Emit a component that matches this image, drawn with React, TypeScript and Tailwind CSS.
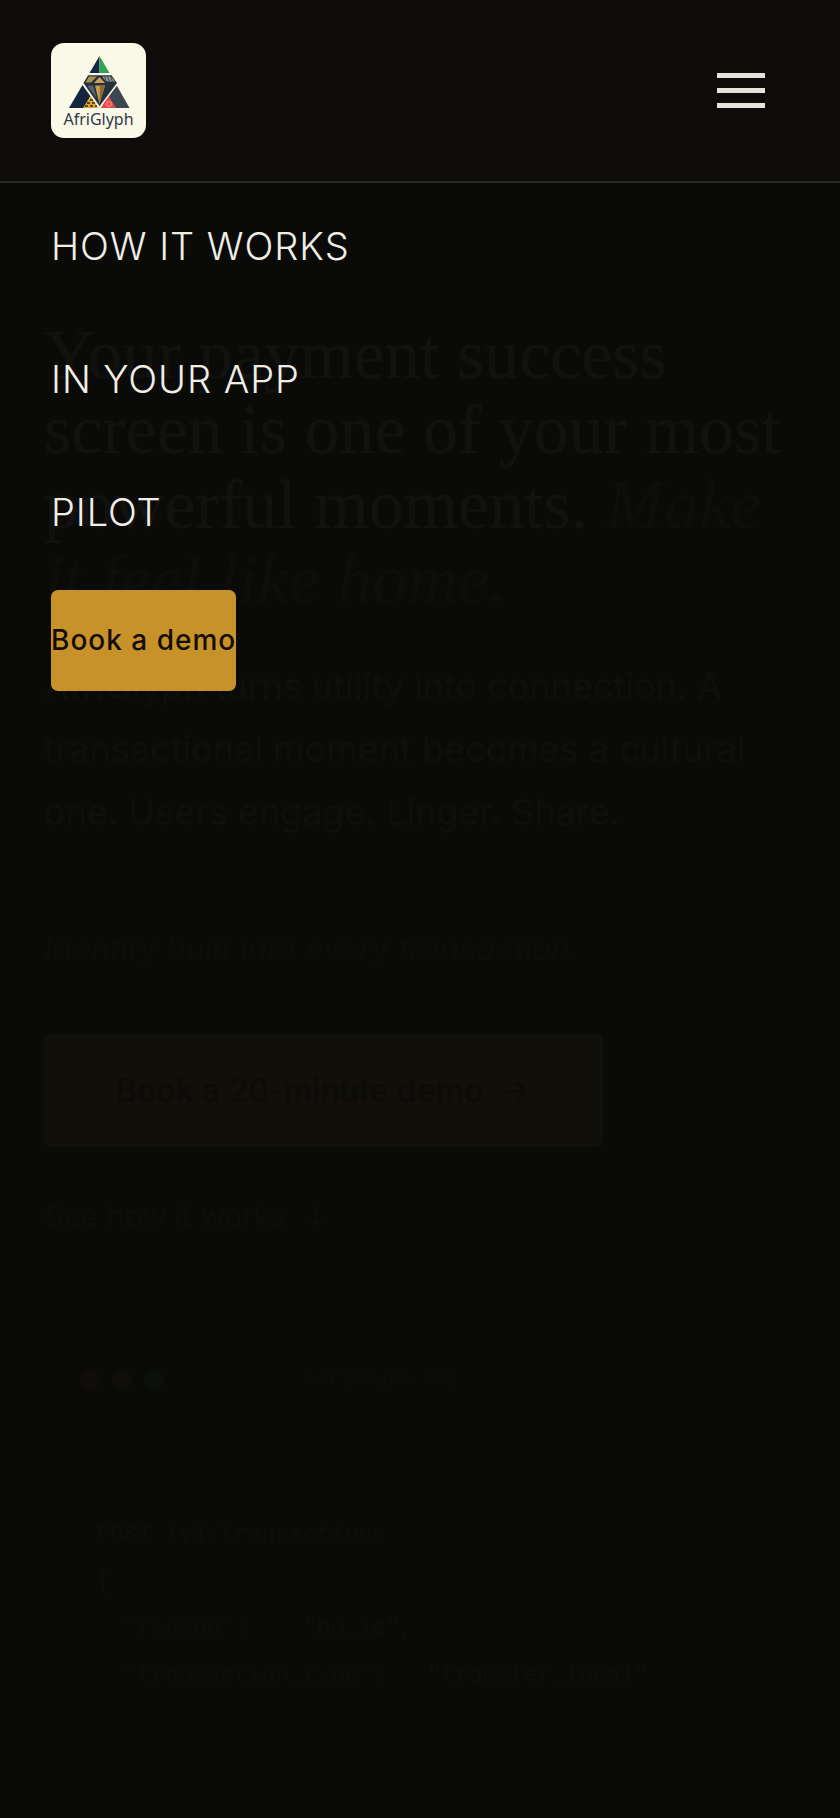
import React, { useState } from 'react';

const NAV_LINKS = [
  { label: 'How it works', href: '#how' },
  { label: 'In your app', href: '#app' },
  { label: 'Pilot', href: '#pilot' },
];

function Logo() {
  return (
    <svg viewBox="0 0 95 95" className="block w-[95px] h-[95px]" role="img" aria-label="AfriGlyph">
      <rect width="95" height="95" rx="13" fill="#faf8e6" />
      <path d="M48.5 13 L38.5 30 H48.5 Z" fill="#14284a" />
      <path d="M48.5 13 L58.5 30 H48.5 Z" fill="#2fa34f" />
      <path d="M31.5 42 L40 54 L33 65 H18 Z" fill="#14233f" />
      <path d="M65.5 42 L57 54 L64 65 H78.5 Z" fill="#3a474f" />
      <path d="M40 52 L47 65 H32 Z" fill="#e0a52f" />
      <path d="M36 60h3M41 60h3M34 63h3M39 63h3M44 63h2M39 57h3" stroke="#2b2a22" strokeWidth="1.4" />
      <path d="M57 52 L65 65 H50 Z" fill="#e8474b" />
      <circle cx="58" cy="61" r="2.4" fill="none" stroke="#f6b0a6" strokeWidth="0.8" />
      <path d="M36.5 31.5 H61 L67 40 L48.5 64.5 L31.5 40 Z" fill="#26303c" stroke="#faf8e6" strokeWidth="1.6" />
      <path d="M38 33.5 H46 L40 39.5 H34.5 Z" fill="#b08f4f" />
      <path d="M48.5 34 L54 40 H43 Z" fill="#c9a45a" />
      <path d="M44 42.5 H54 L48.5 61 Z" fill="#c39d52" />
      <path d="M49 42.5 H54 L48.5 61 Z" fill="#8a6a36" />
      <path d="M36 42.5 H42 L46 56 Z" fill="#56616b" />
      <path d="M51 33.5 h9 l4 5 h-9 Z" fill="#9a9d9c" />
      <path d="M53.5 33.5l2 5M56.5 33.5l2 5M59.5 33.5l2 5" stroke="#26303c" strokeWidth="0.9" />
      <text x="47.5" y="82" textAnchor="middle" fontSize="16" fill="#2f3b4a" className="font-['Noto_Sans',sans-serif]">
        AfriGlyph
      </text>
    </svg>
  );
}

function Hero() {
  return (
    <main className="absolute inset-0 overflow-hidden px-11 pt-[134px]">
      <h1 className="font-['Liberation_Serif',serif] text-[70px] leading-[75px] text-[#e0ddd6]">
        Your payment success screen is one of your most powerful moments.{' '}
        <em className="text-[#8f691f]">Make it feel like home.</em>
      </h1>
      <p className="mt-[38px] text-[36px] leading-[63px] text-[#8a867e]">
        AfriGlyph turns utility into connection. A transactional moment becomes a cultural one. Users engage. Linger.
        Share.
      </p>
      <p className="mt-20 text-[32px] leading-[50px] italic text-[#5a4821]">
        Identity built into every transaction.
      </p>
      <a
        href="#demo"
        className="mt-[60px] flex w-fit rounded-md bg-[#c8922a] px-[72px] py-8 text-[32px] leading-[49px] font-medium text-[#3a2c12]"
      >
        Book a 20-minute demo &nbsp;→
      </a>
      <a href="#how" className="mt-[45px] block w-fit text-[30px] leading-[48px] text-[#66635b]">
        See how it works &nbsp;↓
      </a>
      <section className="-mx-3 mt-24 h-[600px] rounded-2xl bg-[#16150f] px-12 font-['Liberation_Mono',monospace]">
        <div className="flex h-[88px] items-center gap-3">
          <span className="size-5 rounded-full bg-[#a8443c]" />
          <span className="size-5 rounded-full bg-[#a87d24]" />
          <span className="size-5 rounded-full bg-[#2cb04a]" />
          <span className="flex-1 pl-32 text-[20px] text-[#45433b]">AfriGlyph API</span>
        </div>
        <pre className="mt-[88px] pl-4 font-['Liberation_Mono',monospace] text-[23px] leading-[47px] text-[#66635b]">
          <span className="text-[#8f691f]">POST</span>
          {' /v1/transactions\n{\n'}
          <span className="text-[#47706e]">{'  "region"'}</span>
          {':    "ng_la",\n'}
          <span className="text-[#47706e]">{'  "transaction_type"'}</span>
          {':   "transfer_local"'}
        </pre>
      </section>
    </main>
  );
}

export default function App() {
  const [open, setOpen] = useState(true);

  return (
    <div className="flex min-h-screen flex-col bg-[#0a0a08] font-[Inter,sans-serif]">
      <header className="flex items-center justify-between border-b-2 border-[#282826] bg-[#0d0c0a] px-[51px] py-[43px]">
        <a href="#top">
          <Logo />
        </a>
        <button
          type="button"
          onClick={() => setOpen(!open)}
          aria-expanded={open}
          aria-label="Toggle menu"
          className="flex flex-col gap-[10px] p-6"
        >
          <span className="h-[5px] w-12 bg-[#e6e3dc]" />
          <span className="h-[5px] w-12 bg-[#e6e3dc]" />
          <span className="h-[5px] w-12 bg-[#e6e3dc]" />
        </button>
      </header>

      <div className="relative flex-1">
        <Hero />
        {open && (
          <nav className="absolute inset-0 flex flex-col items-start gap-12 bg-[#0a0a08]/97 px-[51px] pt-[33px]">
            <ul className="flex flex-col gap-[73px]">
              {NAV_LINKS.map((link) => (
                <li key={link.href}>
                  <a
                    href={link.href}
                    className="block text-[38px] leading-[60px] font-light tracking-wide text-[#f0ede6] uppercase"
                  >
                    {link.label}
                  </a>
                </li>
              ))}
            </ul>
            <a
              href="#demo"
              className="rounded-[7px] bg-[#c8922a] py-7 text-[28px] leading-[45px] font-medium tracking-[1px] text-[#140d04]"
            >
              Book a demo
            </a>
          </nav>
        )}
      </div>
    </div>
  );
}
